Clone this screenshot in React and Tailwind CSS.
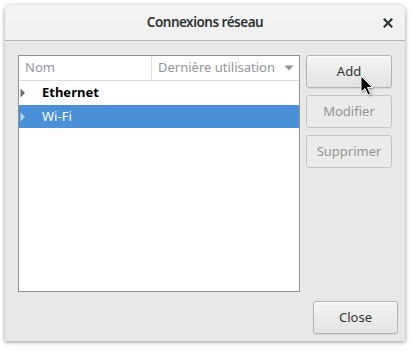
import React from 'react';

const font = { fontFamily: '"Noto Sans", "Open Sans", sans-serif' };

function Caret({ color }) {
  return (
    <svg width="6" height="10" viewBox="0 0 6 10" className="shrink-0">
      <path d="M0.5 0.5 L5 5 L0.5 9.5 Z" fill={color} />
    </svg>
  );
}

function Cursor() {
  return (
    <svg width="14" height="22" viewBox="0 0 14 22" className="absolute left-[355px] top-[70px] drop-shadow-[1px_1px_1px_rgba(0,0,0,0.35)]">
      <path d="M1 1 L1 17 L5 13.5 L8 20 L10.5 19 L7.5 12.5 L12.5 12.5 Z" fill="#000" stroke="#fff" strokeWidth="1" strokeLinejoin="round" />
    </svg>
  );
}

function Btn({ children, disabled }) {
  return (
    <button
      className={
        disabled
          ? 'h-[33px] w-[86px] rounded-[3px] border border-[#c4c4c1] bg-[#ebebea] text-[13px] text-[#929595]'
          : 'h-[33px] w-[86px] rounded-[3px] border border-[#b3b3b0] bg-gradient-to-b from-[#f4f4f3] to-[#e3e3e1] text-[13px] text-[#2e3436] shadow-[inset_0_1px_0_rgba(255,255,255,0.8),0_1px_1px_rgba(0,0,0,0.08)]'
      }
    >
      {children}
    </button>
  );
}

export default function App() {
  return (
    <div className="w-[414px] h-[351px] bg-white pt-[5px] pl-[5px]" style={font}>
      <div className="relative w-[400px] h-[336px] flex flex-col rounded-t-[6px] overflow-hidden bg-[#e8e8e7] shadow-[0_1px_4px_rgba(0,0,0,0.45)]">
        <div className="h-[36px] shrink-0 flex items-center justify-center relative bg-gradient-to-b from-[#f5f5f5] to-[#efefee] border-b border-[#b4b4b1]">
          <span className="text-[13.5px] font-semibold text-[#2e3436] tracking-[-0.5px]">Connexions réseau</span>
          <svg width="10" height="10" viewBox="0 0 10 10" className="absolute right-[12px] top-[13px]">
            <path d="M1.5 1.5 L8.5 8.5 M8.5 1.5 L1.5 8.5" stroke="#2e3436" strokeWidth="2.2" strokeLinecap="square" />
          </svg>
        </div>
        <div className="flex-1 flex flex-col pl-[13px] pr-[7px] pt-[14px] pb-[7px]">
          <div className="flex gap-[6px]">
            <div className="w-[282px] h-[237px] border border-[#8f9191] bg-white flex flex-col">
              <div className="h-[25px] flex border-b border-[#dededc] text-[13px] text-[#92959a]">
                <div className="w-[133px] border-r border-[#dededc] pl-[6px] flex items-center">Nom</div>
                <div className="flex-1 pl-[6px] pr-[5px] flex items-center justify-between">
                  <span>Dernière utilisation</span>
                  <svg width="10" height="6" viewBox="0 0 10 6">
                    <path d="M0.5 0.5 L9.5 0.5 L5 5.5 Z" fill="#8e9192" />
                  </svg>
                </div>
              </div>
              <div className="h-[24px] flex items-center gap-[16px] pl-[1px] text-[13px] font-bold text-black">
                <Caret color="#6b6e6f" />
                <span>Ethernet</span>
              </div>
              <div className="h-[23px] flex items-center gap-[16px] pl-[1px] text-[13px] text-white bg-[#4a90d9]">
                <Caret color="#b7d3f0" />
                <span>Wi-Fi</span>
              </div>
            </div>
            <div className="flex flex-col gap-[7px]">
              <Btn>Add</Btn>
              <Btn disabled>Modifier</Btn>
              <Btn disabled>Supprimer</Btn>
            </div>
          </div>
          <div className="flex justify-end mt-[9px]">
            <button className="h-[33px] w-[85px] rounded-[3px] border border-[#b3b3b0] bg-gradient-to-b from-[#f4f4f3] to-[#e3e3e1] text-[13px] text-[#2e3436] shadow-[inset_0_1px_0_rgba(255,255,255,0.8),0_1px_1px_rgba(0,0,0,0.08)]">
              Close
            </button>
          </div>
        </div>
        <Cursor />
      </div>
    </div>
  );
}
